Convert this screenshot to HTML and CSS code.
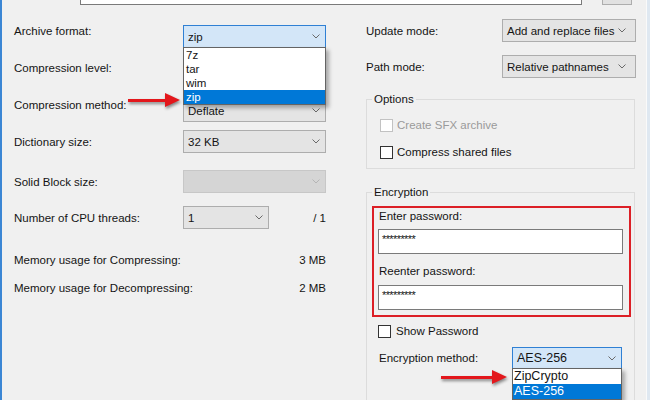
FILE: index.html
```html
<!DOCTYPE html>
<html lang="en">

<head>
    <link rel="stylesheet" href="styles.css">
</head>

<body>
    <div class="window">
        <div class="topbar">
            <div class="path-box"></div>
            <div class="browse-btn"></div>
        </div>

        <div class="columns">
            <!-- left column: format / compression settings -->
            <div class="col">
                <div class="row row--first row--raised">
                    <span class="label">Archive format:</span>
                    <div class="combo combo--open">
                        <span>zip</span>
                        <svg class="chev" viewBox="0 0 8 5"><polyline points="0.5,0.5 4,4 7.5,0.5" /></svg>
                        <ul class="drop">
                            <li>7z</li>
                            <li>tar</li>
                            <li>wim</li>
                            <li class="selected">zip</li>
                        </ul>
                    </div>
                </div>

                <div class="row row--level">
                    <span class="label">Compression level:</span>
                    <div class="combo">
                        <span></span>
                        <svg class="chev" viewBox="0 0 8 5"><polyline points="0.5,0.5 4,4 7.5,0.5" /></svg>
                    </div>
                </div>

                <div class="row row--method row--raised">
                    <span class="label">Compression method:</span>
                    <div class="combo">
                        <span>Deflate</span>
                        <svg class="chev" viewBox="0 0 8 5"><polyline points="0.5,0.5 4,4 7.5,0.5" /></svg>
                    </div>
                    <div class="arrow arrow--method"></div>
                </div>

                <div class="row row--dict">
                    <span class="label">Dictionary size:</span>
                    <div class="combo">
                        <span>32 KB</span>
                        <svg class="chev" viewBox="0 0 8 5"><polyline points="0.5,0.5 4,4 7.5,0.5" /></svg>
                    </div>
                </div>

                <div class="row row--solid">
                    <span class="label">Solid Block size:</span>
                    <div class="combo combo--disabled">
                        <span></span>
                        <svg class="chev" viewBox="0 0 8 5"><polyline points="0.5,0.5 4,4 7.5,0.5" /></svg>
                    </div>
                </div>

                <div class="row row--threads">
                    <span class="label">Number of CPU threads:</span>
                    <div class="combo combo--small">
                        <span>1</span>
                        <svg class="chev" viewBox="0 0 8 5"><polyline points="0.5,0.5 4,4 7.5,0.5" /></svg>
                    </div>
                    <span class="threads-max">/ 1</span>
                </div>

                <div class="mem mem--first">
                    <span>Memory usage for Compressing:</span>
                    <span>3 MB</span>
                </div>
                <div class="mem">
                    <span>Memory usage for Decompressing:</span>
                    <span>2 MB</span>
                </div>
            </div>

            <!-- right column: modes, options, encryption -->
            <div class="col">
                <div class="row row--update">
                    <span class="label label--wide">Update mode:</span>
                    <div class="combo combo--mode">
                        <span>Add and replace files</span>
                        <svg class="chev" viewBox="0 0 8 5"><polyline points="0.5,0.5 4,4 7.5,0.5" /></svg>
                    </div>
                </div>

                <div class="row row--path">
                    <span class="label label--wide">Path mode:</span>
                    <div class="combo combo--mode">
                        <span>Relative pathnames</span>
                        <svg class="chev" viewBox="0 0 8 5"><polyline points="0.5,0.5 4,4 7.5,0.5" /></svg>
                    </div>
                </div>

                <fieldset class="group group--options">
                    <legend>Options</legend>
                    <div class="group__body">
                        <label class="check-row check-row--disabled">
                            <span class="check"></span>
                            <span>Create SFX archive</span>
                        </label>
                        <label class="check-row check-row--shared">
                            <span class="check"></span>
                            <span>Compress shared files</span>
                        </label>
                    </div>
                </fieldset>

                <fieldset class="group group--enc">
                    <legend>Encryption</legend>
                    <div class="group__body">
                        <div class="pw-box">
                            <div class="pw-label">Enter password:</div>
                            <div class="pw-input">*********</div>
                            <div class="pw-label pw-label--second">Reenter password:</div>
                            <div class="pw-input">*********</div>
                        </div>

                        <label class="check-row check-row--show">
                            <span class="check"></span>
                            <span>Show Password</span>
                        </label>

                        <div class="row row--enc">
                            <span class="label label--enc">Encryption method:</span>
                            <div class="combo combo--open combo--enc">
                                <span>AES-256</span>
                                <svg class="chev" viewBox="0 0 8 5"><polyline points="0.5,0.5 4,4 7.5,0.5" /></svg>
                                <ul class="drop drop--enc">
                                    <li>ZipCrypto</li>
                                    <li class="selected">AES-256</li>
                                </ul>
                            </div>
                            <div class="arrow arrow--enc"></div>
                        </div>
                    </div>
                </fieldset>
            </div>
        </div>
    </div>
</body>

</html>
```

FILE: styles.css
```css
*,
*::after,
*::before {
    box-sizing: border-box;
}

body {
    margin: 0;
    width: 650px;
    height: 400px;
    overflow: hidden;
    background: #dfe8f1;
    font-family: "Segoe UI", "Liberation Sans", Arial, sans-serif;
    font-size: 11.5px;
    color: #141414;
}

.window {
    width: 647px;
    height: 400px;
    overflow: hidden;
    background: #f0f0f0;
    border-left: 2px solid #3b86d4;
    border-right: 1px solid #fafafa;
}

/* bits of the row above, cut off by the top edge */
.topbar {
    display: flex;
    height: 5px;
}

.path-box {
    margin-left: 78px;
    width: 502px;
    background: #fff;
    border: 1px solid #7a7a7a;
    border-top: none;
}

.browse-btn {
    margin-left: 20px;
    width: 30px;
    background: #e1e1e1;
    border: 1px solid #adadad;
    border-top: none;
}

.columns {
    display: grid;
    grid-template-columns: 312px 270px;
    column-gap: 40px;
    padding-left: 12px;
}

.col {
    display: flex;
    flex-direction: column;
}

.row {
    position: relative;
    display: flex;
    align-items: center;
    height: 23px;
}

.label {
    width: 169px;
    flex-shrink: 0;
}

.label--wide {
    width: 136px;
}

/* label sits a little higher than its combo */
.row--raised .label {
    margin-bottom: 11px;
}

.row--first { margin-top: 20px; }
.row--level { margin-top: 8px; }
.row--method { margin-top: 20px; }
.row--dict { margin-top: 8px; }
.row--solid { margin-top: 17px; }
.row--threads { margin-top: 13px; }

.row--update { margin-top: 14px; }
.row--path { margin-top: 13px; }

.combo {
    position: relative;
    display: flex;
    align-items: center;
    justify-content: space-between;
    width: 143px;
    height: 23px;
    padding: 0 5px 0 4px;
    background: #e4e4e4;
    border: 1px solid #adadad;
}

.combo--open {
    background: #d3e6f8;
    border-color: #2f80d4;
}

.combo--disabled {
    background: #d5d5d5;
    border-color: #c7c7c7;
}

.combo--disabled .chev polyline {
    stroke: #b5b5b5;
}

.combo--small {
    width: 86px;
}

.combo--mode {
    width: 134px;
    padding-right: 9px;
}

.chev {
    width: 8px;
    height: 5px;
    flex-shrink: 0;
}

.chev polyline {
    fill: none;
    stroke: #6a6a6a;
    stroke-width: 1;
}

.threads-max {
    margin-left: auto;
}

.drop {
    position: absolute;
    top: 100%;
    left: -1px;
    right: -1px;
    margin: 0;
    padding: 0;
    list-style: none;
    background: #fff;
    border: 1px solid #646464;
    box-shadow: 3px 3px 4px rgba(0, 0, 0, 0.3);
    z-index: 2;
}

.drop li {
    height: 14px;
    line-height: 14px;
    padding-left: 2px;
}

.drop li.selected {
    background: #0078d7;
    color: #fff;
}

.drop--enc li {
    height: 15px;
    line-height: 15px;
    padding-left: 1px;
    font-size: 12.5px;
}

.mem {
    display: flex;
    justify-content: space-between;
    height: 16px;
    line-height: 16px;
    margin-top: 12px;
}

.mem--first {
    margin-top: 23px;
}

/* red annotation arrows */
.arrow {
    position: absolute;
    display: flex;
    align-items: center;
    height: 14px;
    filter: drop-shadow(1px 2px 1.5px rgba(0, 0, 0, 0.45));
}

.arrow::before {
    content: "";
    flex: 1;
    height: 3px;
    background: #e3171c;
}

.arrow::after {
    content: "";
    border-left: 15px solid #e3171c;
    border-top: 7px solid transparent;
    border-bottom: 7px solid transparent;
}

.arrow--method {
    left: 114px;
    top: -6px;
    width: 52px;
}

.arrow--enc {
    left: 69px;
    top: 23px;
    width: 66px;
}

/* group boxes */
.group {
    margin: 0;
    padding: 0;
    min-width: 0;
    border: 1px solid #dcdcdc;
}

.group legend {
    margin-left: 5px;
    padding: 0 2px;
    line-height: 16px;
}

.group--options {
    margin-top: 13px;
    width: 269px;
}

.group--options .group__body {
    display: flex;
    flex-direction: column;
    padding: 11px 0 9px 13px;
}

.group--enc {
    margin-top: 15px;
    width: 269px;
    height: 230px;
}

.group--enc .group__body {
    display: flex;
    flex-direction: column;
    padding: 6px 3px 0 5px;
}

.check-row {
    display: flex;
    align-items: center;
    gap: 4px;
    height: 14px;
}

.check {
    width: 13px;
    height: 13px;
    background: #fff;
    border: 1px solid #333;
}

.check-row--disabled {
    color: #9a9a9a;
}

.check-row--disabled .check {
    border-color: #c2c2c2;
}

.check-row--shared {
    margin-top: 13px;
}

.check-row--show {
    margin-top: 7px;
    padding-left: 6px;
    gap: 5px;
}

.pw-box {
    display: flex;
    flex-direction: column;
    padding: 0 6px 5px 4px;
    border: 2px solid #dc1f26;
}

.pw-label {
    padding-left: 1px;
    line-height: 16px;
}

.pw-label--second {
    margin-top: 9px;
}

.pw-input {
    height: 25px;
    margin-top: 5px;
    padding: 1px 3px 0;
    line-height: 16px;
    letter-spacing: -0.6px;
    font-size: 11px;
    background: #fff;
    border: 1px solid #7a7a7a;
}

.pw-label--second + .pw-input {
    margin-top: 6px;
}

.row--enc {
    margin-top: 9px;
    height: 22px;
    padding-left: 7px;
}

.label--enc {
    width: 133px;
}

.combo--enc {
    width: 110px;
    height: 22px;
    font-size: 12.5px;
}
```
